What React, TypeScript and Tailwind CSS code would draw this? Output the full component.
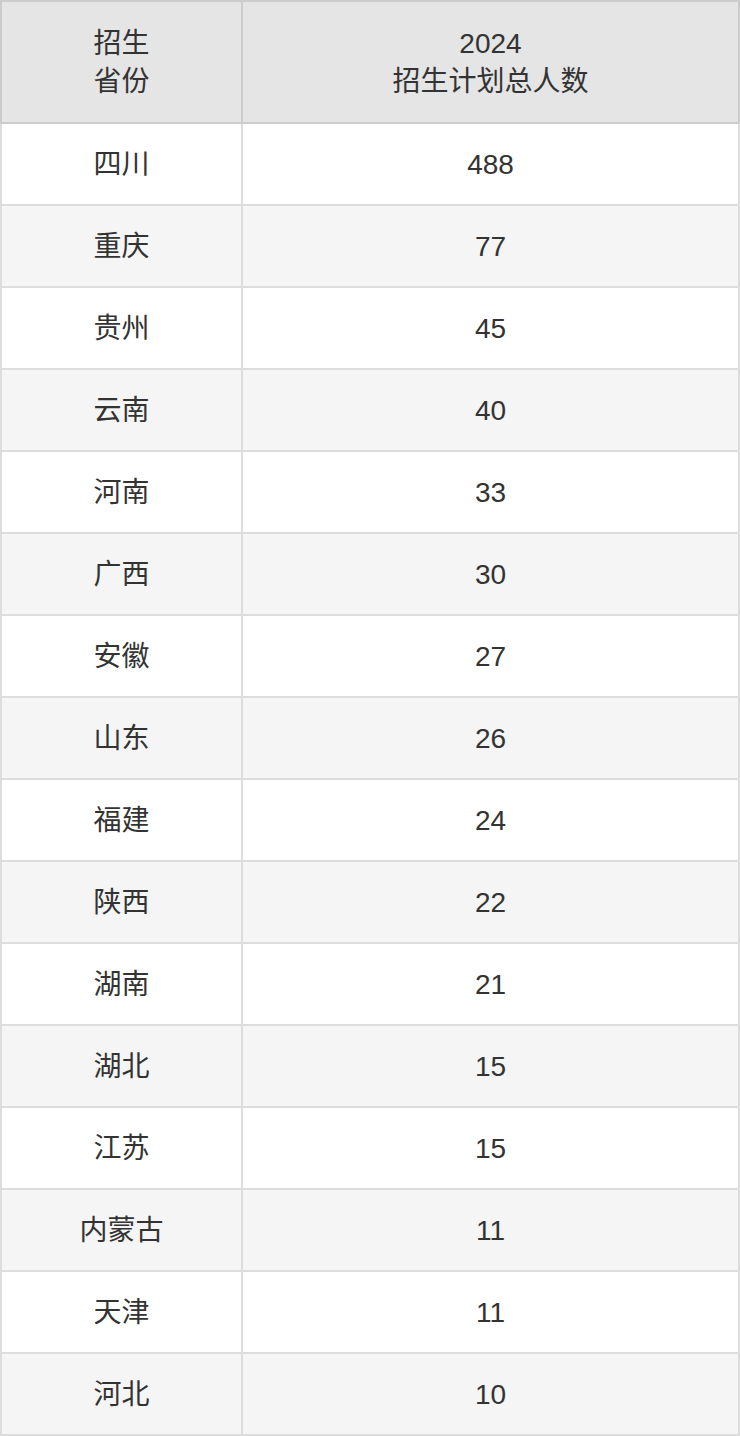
import React from "react";

const rows: [string, string][] = [
  ["四川", "488"],
  ["重庆", "77"],
  ["贵州", "45"],
  ["云南", "40"],
  ["河南", "33"],
  ["广西", "30"],
  ["安徽", "27"],
  ["山东", "26"],
  ["福建", "24"],
  ["陕西", "22"],
  ["湖南", "21"],
  ["湖北", "15"],
  ["江苏", "15"],
  ["内蒙古", "11"],
  ["天津", "11"],
  ["河北", "10"],
];

export default function App() {
  return (
    <div
      className="w-[740px] bg-white text-[#333333]"
      style={{ fontFamily: '"Liberation Sans", Arial, "Noto Sans CJK SC", sans-serif' }}
    >
      <table className="w-[740px] border-collapse text-[28px] leading-[39px] text-center table-fixed">
        <colgroup>
          <col className="w-[241px]" />
          <col />
        </colgroup>
        <thead>
          <tr className="bg-[#e5e5e5] h-[122px]">
            <th className="border-2 border-[#cccccc] font-normal px-2 pt-[1px] pb-0 leading-[38px]">
              招生
              <br />
              省份
            </th>
            <th className="border-2 border-[#cccccc] font-normal px-2 pt-[1px] pb-0 leading-[38px]">
              2024
              <br />
              招生计划总人数
            </th>
          </tr>
        </thead>
        <tbody>
          {rows.map(([p, n], i) => (
            <tr key={i} className={`h-[82px] ${i % 2 === 1 ? "bg-[#f5f5f5]" : "bg-white"}`}>
              <td className="border-2 border-[#dddddd] px-2 pt-[1px] pb-0">{p}</td>
              <td className="border-2 border-[#dddddd] px-2 pt-[1px] pb-0">{n}</td>
            </tr>
          ))}
        </tbody>
      </table>
    </div>
  );
}
